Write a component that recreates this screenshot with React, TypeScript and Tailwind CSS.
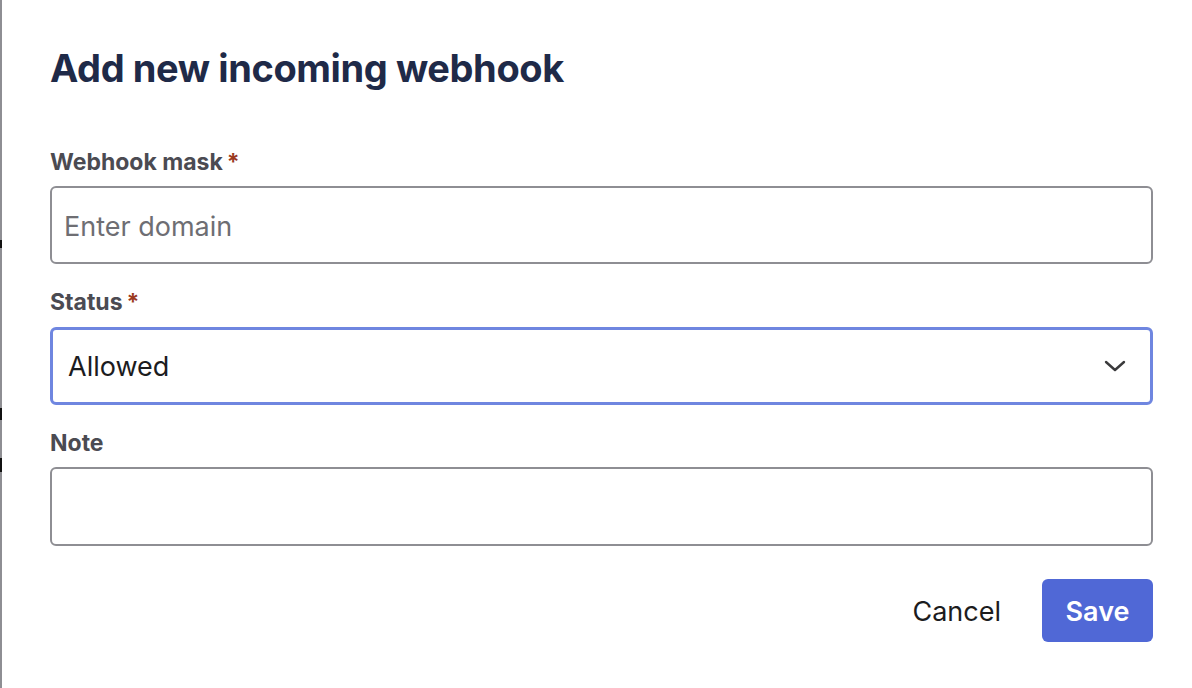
export default function App() {
  return (
    <div className="flex h-[688px] w-[1192px] bg-white font-['Inter',sans-serif]">
      {/* left edge of the page behind the dialog */}
      <div className="flex w-[2px] flex-col bg-[#8e8e93]">
        <div className="h-[240px]" />
        <div className="h-[8px] bg-[#111]" />
        <div className="h-[160px]" />
        <div className="h-[12px] bg-[#111]" />
        <div className="h-[38px]" />
        <div className="h-[14px] bg-[#111]" />
      </div>

      <div className="flex flex-1 flex-col pl-[48px] pr-[39px] pt-[44px]">
        <h1 className="text-[38px] font-bold leading-[48px] tracking-[-0.4px] text-[#1f2a48]">
          Add new incoming webhook
        </h1>

        <form className="mt-[54px] flex flex-col">
          <label className="flex items-center text-[23px] font-bold leading-[32px] text-[#4b4b52]">
            Webhook mask<span className="ml-[4px] text-[#9b3a1f]">*</span>
          </label>
          <input
            placeholder="Enter domain"
            className="mt-[8px] h-[78px] rounded-[6px] border-2 border-[#8e8e93] px-[12px] pt-[2px] text-[27px] text-[#1c1c1e] outline-none placeholder:text-[#6e6e73]"
          />

          <label className="mt-[22px] flex items-center text-[23px] font-bold leading-[32px] text-[#4b4b52]">
            Status<span className="ml-[4px] text-[#9b3a1f]">*</span>
          </label>
          <div className="mt-[9px] flex h-[78px] items-center justify-between rounded-[6px] border-[3px] border-[#6f86e0] pl-[15px] pr-[24px]">
            <span className="pt-[3px] text-[27px] text-[#1c1c1e]">Allowed</span>
            <svg width="22" height="12" viewBox="0 0 22 12" fill="none" className="text-[#3a3a3c]">
              <polyline points="2,2 11,10 20,2" stroke="currentColor" strokeWidth="2.4" strokeLinecap="round" strokeLinejoin="round" />
            </svg>
          </div>

          <label className="mt-[22px] flex items-center text-[23px] font-bold leading-[32px] text-[#4b4b52]">
            Note
          </label>
          <textarea className="mt-[8px] h-[79px] resize-none rounded-[6px] border-2 border-[#8e8e93] px-[12px] py-[10px] text-[27px] outline-none" />

          <div className="mt-[33px] flex items-center justify-end gap-[41px]">
            <button type="button" className="pt-[3px] text-[27px] text-[#1c1c1e]">
              Cancel
            </button>
            <button
              type="button"
              className="h-[63px] w-[111px] rounded-[6px] bg-[#5068d6] pt-[3px] text-[27px] font-semibold text-white"
            >
              Save
            </button>
          </div>
        </form>
      </div>
    </div>
  );
}
